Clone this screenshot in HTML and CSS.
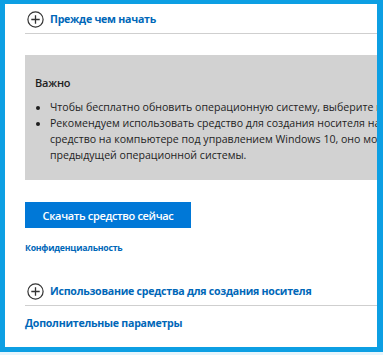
FILE: index.html
```html
<!DOCTYPE html>
<html lang="ru">
<head>
    <meta charset="UTF-8">
    <title>Скачать Windows 10</title>
    <link rel="stylesheet" href="styles.css">
</head>
<body>
    <div class="frame">
        <div class="section-head first">
            <svg class="plus" width="17" height="17" viewBox="0 0 17 17">
                <circle cx="8.5" cy="8.5" r="7.6" fill="none" stroke="#333" stroke-width="1.2"/>
                <path d="M8.5 4.3v8.4M4.3 8.5h8.4" stroke="#333" stroke-width="1.3"/>
            </svg>
            <span class="head-text">Прежде чем начать</span>
        </div>

        <div class="notice">
            <div class="notice-title">Важно</div>
            <ul class="notice-list">
                <li>Чтобы бесплатно обновить операционную систему, выберите пункт «Обновить сейчас».</li>
                <li>Рекомендуем использовать средство для создания носителя на USB-устройстве.<br>средство на компьютере под управлением Windows 10, оно может быть удалено с<br>предыдущей операционной системы.</li>
            </ul>
        </div>

        <button class="download">Скачать средство сейчас</button>
        <a class="privacy" href="#">Конфиденциальность</a>

        <div class="section-head second">
            <svg class="plus" width="17" height="17" viewBox="0 0 17 17">
                <circle cx="8.5" cy="8.5" r="7.6" fill="none" stroke="#333" stroke-width="1.2"/>
                <path d="M8.5 4.3v8.4M4.3 8.5h8.4" stroke="#333" stroke-width="1.3"/>
            </svg>
            <span class="head-text">Использование средства для создания носителя</span>
        </div>

        <a class="more" href="#">Дополнительные параметры</a>
    </div>
</body>
</html>
```

FILE: styles.css
```css
/* Page */
body {
    margin: 0;
    background: #e6f5fc;
    font-family: "Open Sans", "Noto Sans", sans-serif;
}

/* Blue highlight frame around the captured region */
.frame {
    box-sizing: border-box;
    width: 383px;
    height: 352px;
    border-style: solid;
    border-color: #0d9fe3;
    border-width: 4px 6px 5px 5px;
    background: #fff;
    padding-left: 20px;
    overflow: hidden;
}

/* Collapsible section headers */
.section-head {
    display: flex;
    align-items: center;
    height: 28px;
    border-bottom: 1px solid #cfcfcf;
}

.section-head .plus {
    margin-left: 2px;
    margin-right: 6px;
    flex-shrink: 0;
}

.head-text {
    color: #0067b8;
    font-size: 10.6px;
    font-weight: 700;
    letter-spacing: -0.25px;
    white-space: nowrap;
}

.section-head.first {
    margin-top: 1px;
}

.section-head.second {
    margin-top: 22px;
}

/* Grey notice box */
.notice {
    margin-top: 21px;
    background: #d2d2d2;
    padding: 20px 0 17px 10px;
    color: #1e1e1e;
    white-space: nowrap;
}

.notice-title {
    font-size: 11px;
    font-weight: 600;
    line-height: 16px;
    letter-spacing: -0.2px;
}

.notice-list {
    margin: 8px 0 0;
    padding-left: 15px;
    font-size: 10.6px;
    line-height: 16px;
}

/* Download button */
.download {
    display: block;
    margin-top: 22px;
    width: 166px;
    height: 26px;
    border: none;
    background: #0078d7;
    color: #fff;
    font-family: inherit;
    font-size: 11px;
    font-weight: 600;
    letter-spacing: -0.35px;
    padding: 0;
}

.privacy {
    display: block;
    margin-top: 13px;
    color: #0067b8;
    font-size: 8.7px;
    font-weight: 700;
    line-height: 14px;
    text-decoration: none;
    letter-spacing: -0.2px;
}

.more {
    display: block;
    margin-top: 9px;
    color: #0067b8;
    font-size: 10.6px;
    font-weight: 700;
    line-height: 16px;
    text-decoration: none;
    letter-spacing: -0.25px;
}
```
